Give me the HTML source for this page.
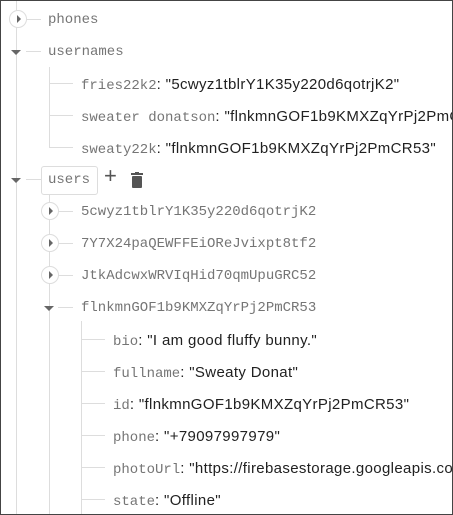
<!DOCTYPE html><html><head><style>
body{margin:0;width:453px;height:515px;overflow:hidden;background:#fff;position:relative;font-family:"Liberation Sans",sans-serif}
#f{position:absolute;left:0;top:0;width:451px;height:513px;border:1px solid #444;overflow:hidden}
.v{position:absolute;width:1px;background:#ddd}
.h{position:absolute;height:1px;background:#ddd}
.t{position:absolute;white-space:nowrap;font-size:14px;line-height:18px}
.k{font-family:"Liberation Mono",monospace;color:#757575;font-size:14px;letter-spacing:0}
.val{color:#212121;font-size:15px;letter-spacing:0.35px}
.c{position:absolute;width:16px;height:16px;border:1px solid #ddd;border-radius:50%;background:#fff}
.c:after{content:"";position:absolute;left:7px;top:4px;border-left:4px solid #666;border-top:4px solid transparent;border-bottom:4px solid transparent}
.d{position:absolute;width:0;height:0;border-top:5px solid #666;border-left:5px solid transparent;border-right:5px solid transparent}
</style></head><body><div id="f">
<div class="v" style="left:15px;top:0;height:520px"></div>
<div class="v" style="left:48px;top:66px;height:81px"></div>
<div class="v" style="left:48px;top:192px;height:330px"></div>
<div class="v" style="left:80px;top:320px;height:200px"></div>
<div class="h" style="left:26px;top:18px;width:14px"></div>
<div class="h" style="left:25px;top:50px;width:15px"></div>
<div class="h" style="left:25px;top:178px;width:15px"></div>
<div class="h" style="left:48px;top:82px;width:24px"></div>
<div class="h" style="left:48px;top:114px;width:24px"></div>
<div class="h" style="left:48px;top:146px;width:24px"></div>
<div class="h" style="left:57px;top:210px;width:15px"></div>
<div class="h" style="left:57px;top:242px;width:15px"></div>
<div class="h" style="left:57px;top:274px;width:15px"></div>
<div class="h" style="left:57px;top:306px;width:15px"></div>
<div class="h" style="left:80px;top:338px;width:24px"></div>
<div class="h" style="left:80px;top:370px;width:24px"></div>
<div class="h" style="left:80px;top:402px;width:24px"></div>
<div class="h" style="left:80px;top:434px;width:24px"></div>
<div class="h" style="left:80px;top:466px;width:24px"></div>
<div class="h" style="left:80px;top:498px;width:24px"></div>
<div class="c" style="left:8px;top:9px"></div>
<div class="d" style="left:10px;top:49px"></div>
<div class="d" style="left:10px;top:177px"></div>
<div class="c" style="left:40px;top:201px"></div>
<div class="c" style="left:40px;top:233px"></div>
<div class="c" style="left:40px;top:265px"></div>
<div class="d" style="left:43px;top:305px"></div>
<div style="position:absolute;left:40px;top:165px;width:55px;height:27px;border:1px solid #ddd;border-radius:3px;background:#fff"></div>
<div class="t k" style="left:47px;top:10px">phones</div>
<div class="t k" style="left:47px;top:42px">usernames</div>
<div class="t" style="left:80px;top:74px"><span class="k">fries22k2</span><span class="val">: "5cwyz1tblrY1K35y220d6qotrjK2"</span></div>
<div class="t" style="left:80px;top:106px"><span class="k">sweater donatson</span><span class="val">: "flnkmnGOF1b9KMXZqYrPj2PmCR53"</span></div>
<div class="t" style="left:80px;top:138px"><span class="k">sweaty22k</span><span class="val">: "flnkmnGOF1b9KMXZqYrPj2PmCR53"</span></div>
<div class="t k" style="left:47px;top:170px">users</div>
<div class="t" style="left:103px;top:166px;font-size:22px;color:#555">+</div>
<svg style="position:absolute;left:129px;top:171px" width="14" height="16" viewBox="0 0 14 16"><rect x="1" y="1" width="12" height="2" fill="#555"/><rect x="5" y="0" width="4" height="2" fill="#555"/><rect x="2" y="4" width="10" height="12" rx="1" fill="#555"/></svg>
<div class="t k" style="left:80px;top:202px">5cwyz1tblrY1K35y220d6qotrjK2</div>
<div class="t k" style="left:80px;top:234px">7Y7X24paQEWFFEiOReJvixpt8tf2</div>
<div class="t k" style="left:80px;top:266px">JtkAdcwxWRVIqHid70qmUpuGRC52</div>
<div class="t k" style="left:80px;top:298px">flnkmnGOF1b9KMXZqYrPj2PmCR53</div>
<div class="t" style="left:112px;top:330px"><span class="k">bio</span><span class="val">: "I am good fluffy bunny."</span></div>
<div class="t" style="left:112px;top:362px"><span class="k">fullname</span><span class="val">: "Sweaty Donat"</span></div>
<div class="t" style="left:112px;top:394px"><span class="k">id</span><span class="val">: "flnkmnGOF1b9KMXZqYrPj2PmCR53"</span></div>
<div class="t" style="left:112px;top:426px"><span class="k">phone</span><span class="val">: "+79097997979"</span></div>
<div class="t" style="left:112px;top:458px"><span class="k">photoUrl</span><span class="val">: "https://firebasestorage.googleapis.com</span></div>
<div class="t" style="left:112px;top:490px"><span class="k">state</span><span class="val">: "Offline"</span></div>
</div></body></html>
